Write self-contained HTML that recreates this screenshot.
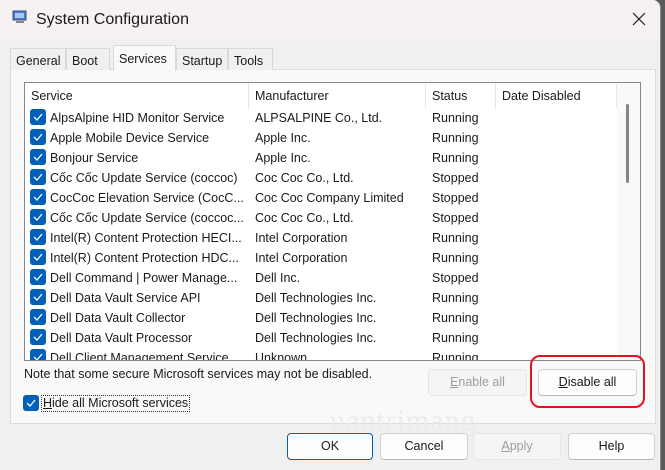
<!DOCTYPE html>
<html><head><meta charset="utf-8"><style>
*{box-sizing:border-box;margin:0;padding:0}
body{width:665px;height:470px;overflow:hidden;background:#5a5a5a;font-family:"Liberation Sans",sans-serif;font-size:12.5px;color:#1a1a1a;position:relative}
.win{position:absolute;left:0;top:0;width:661px;height:470px;background:#f0f0f0;border-right:1px solid #8a8a8a;border-top-right-radius:8px;overflow:hidden}
.title{position:absolute;left:0;top:0;width:661px;height:40px;background:#f6f1f3}
.title span{position:absolute;left:36px;top:11px;font-size:16px;color:#1a1a1a}
.ico{position:absolute;left:12px;top:10px;width:16px;height:14px}
.x{position:absolute;left:632px;top:12px}
.tab{position:absolute;top:48px;height:22px;border:1px solid #d9d9d9;border-bottom:none;background:#f0f0f0;padding:5px 5px 0;font-size:12.5px}
.tab.act{top:45px;height:26px;background:#f9f9f9;z-index:2;padding-top:6px}
.panel{position:absolute;left:10px;top:69px;width:646px;height:355px;background:#f9f9f9;border:1px solid #dcdcdc}
.list{position:absolute;left:24px;top:82px;width:617px;height:279px;background:#fff;border:1px solid #828790;overflow:hidden}
.hdr{position:absolute;top:1px;height:24px;line-height:24px;padding-left:6px;border-right:1px solid #e5e5e5}
.row{position:absolute;left:0;height:20px;width:592px;line-height:20px}
.row div{position:absolute;top:1px;white-space:nowrap;overflow:hidden}
.cb{position:absolute;left:5px;top:2px;width:16px;height:16px;background:#005fb8;border-radius:3px}
.cb svg{position:absolute;left:3px;top:4px}
.sb{position:absolute;left:592px;top:0;width:24px;height:279px;background:#f9f9f9}
.thumb{position:absolute;left:601px;top:21px;width:3px;height:79px;background:#858585;border-radius:2px}
.btn{position:absolute;height:27px;background:#fdfdfd;border:1px solid #d0d0d0;border-bottom-color:#b8b8b8;border-radius:4px;text-align:center;line-height:25px;font-size:12.5px}
.dis{color:#9d9d9d;background:#f5f5f5;border-color:#e5e5e5}
u{text-decoration:underline}
</style></head><body>
<div class="win">
<div class="title">
<svg class="ico" viewBox="0 0 16 14"><rect x="1" y="1" width="13" height="9" fill="#4a7fd0" stroke="#3a4c7a"/><rect x="3" y="3" width="9" height="5" fill="#a8c8f0"/><rect x="4" y="11" width="8" height="2" fill="#888"/></svg>
<span>System Configuration</span>
<svg class="x" width="14" height="14" viewBox="0 0 14 14"><path d="M1 1L13 13M13 1L1 13" stroke="#222" stroke-width="1.2"/></svg>
</div>
<div class="panel"></div>
<div class="tab" style="left:10px;width:56px">General</div>
<div class="tab" style="left:66px;width:44px">Boot</div>
<div class="tab act" style="left:113px;width:63px">Services</div>
<div class="tab" style="left:176px;width:52px">Startup</div>
<div class="tab" style="left:228px;width:45px">Tools</div>
<div class="list">
<div class="hdr" style="left:0;width:224px">Service</div>
<div class="hdr" style="left:224px;width:177px">Manufacturer</div>
<div class="hdr" style="left:401px;width:70px">Status</div>
<div class="hdr" style="left:471px;width:121px">Date Disabled</div>
<div id="rows"></div>
<div class="sb"></div><div class="thumb"></div>
</div>
<div style="position:absolute;left:24px;top:367px">Note that some secure Microsoft services may not be disabled.</div>
<div class="cb" style="left:23px;top:395px"><svg width="10" height="8" viewBox="0 0 10 8"><path d="M1 4L4 7L9 1" stroke="#fff" stroke-width="1.3" fill="none"/></svg></div>
<div style="position:absolute;left:41px;top:395px;border:1px dotted #333;padding:0 1px;line-height:15px"><u>H</u>ide all Microsoft services</div>
<div class="btn dis" style="left:428px;top:369px;width:99px"><u>E</u>nable all</div>
<div class="btn" style="left:538px;top:369px;width:99px"><u>D</u>isable all</div>
<div style="position:absolute;left:530px;top:355px;width:115px;height:53px;border:2px solid #e0141e;border-radius:10px"></div>
<div style="position:absolute;left:330px;top:404px;font-size:30px;color:#ebebeb;font-family:'Liberation Serif',serif;letter-spacing:1px">uantrimang</div>
<div class="btn" style="left:287px;top:433px;width:86px;border:1px solid #005fb8">OK</div>
<div class="btn" style="left:380px;top:433px;width:88px">Cancel</div>
<div class="btn dis" style="left:473px;top:433px;width:88px"><u>A</u>pply</div>
<div class="btn" style="left:568px;top:433px;width:87px">Help</div>
</div>
<script>
var d=[["AlpsAlpine HID Monitor Service","ALPSALPINE  Co., Ltd.","Running"],["Apple Mobile Device Service","Apple Inc.","Running"],["Bonjour Service","Apple Inc.","Running"],["Cốc Cốc Update Service (coccoc)","Coc Coc Co., Ltd.","Stopped"],["CocCoc Elevation Service (CocC...","Coc Coc Company Limited","Stopped"],["Cốc Cốc Update Service (coccoc...","Coc Coc Co., Ltd.","Stopped"],["Intel(R) Content Protection HECI...","Intel Corporation","Running"],["Intel(R) Content Protection HDC...","Intel Corporation","Running"],["Dell Command | Power Manage...","Dell Inc.","Stopped"],["Dell Data Vault Service API","Dell Technologies Inc.","Running"],["Dell Data Vault Collector","Dell Technologies Inc.","Running"],["Dell Data Vault Processor","Dell Technologies Inc.","Running"],["Dell Client Management Service","Unknown","Running"]];
var h="";d.forEach(function(r,i){h+='<div class="row" style="top:'+(24+i*20)+'px"><span class="cb"><svg width="10" height="8" viewBox="0 0 10 8"><path d="M1 4L4 7L9 1" stroke="#fff" stroke-width="1.3" fill="none"/></svg></span><div style="left:25px;width:196px">'+r[0]+'</div><div style="left:230px">'+r[1]+'</div><div style="left:407px">'+r[2]+'</div></div>';});
document.getElementById("rows").innerHTML=h;
</script>
</body></html>
